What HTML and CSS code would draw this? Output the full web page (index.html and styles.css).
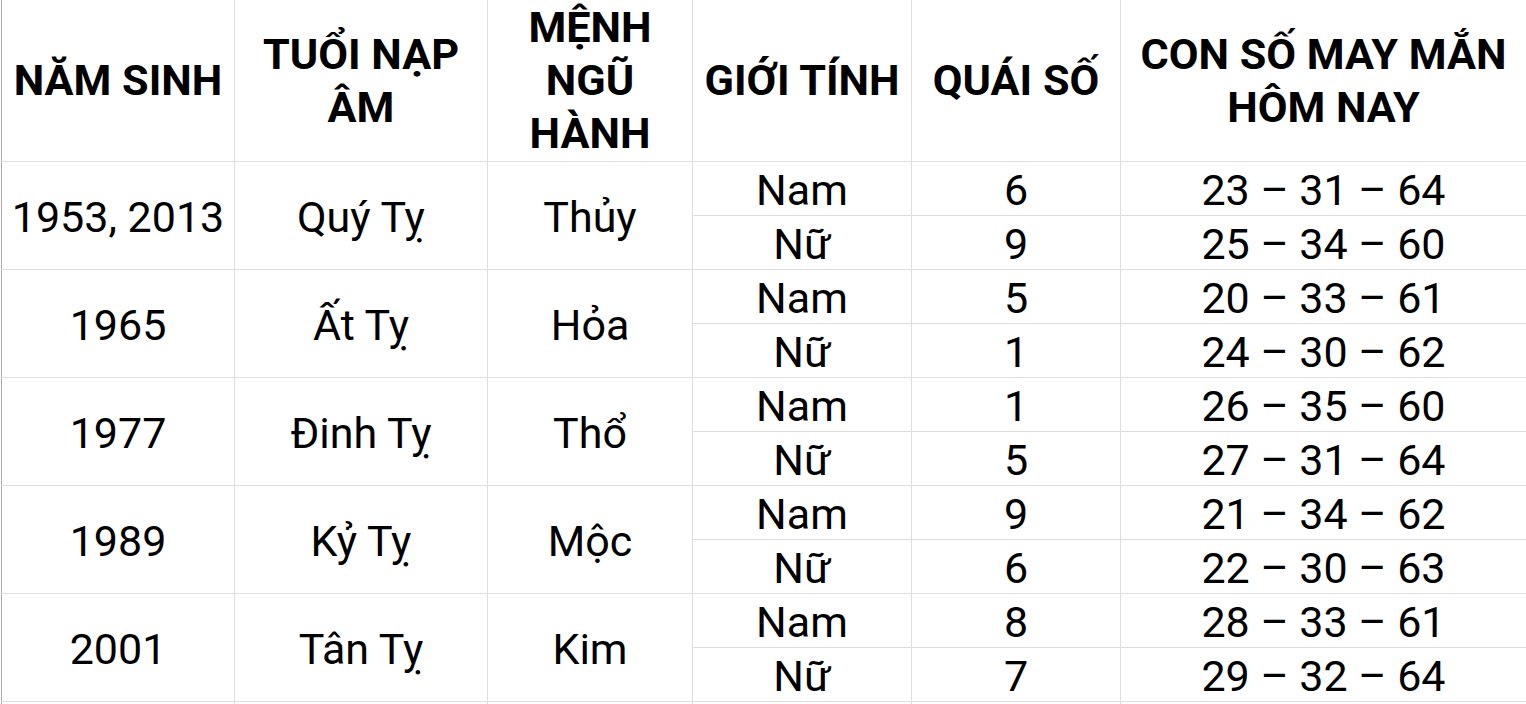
FILE: index.html
```html
<!DOCTYPE html>
<html lang="vi">
<head>
<meta charset="utf-8">
<link rel="stylesheet" href="styles.css">
</head>
<body>
<table class="luck">
  <colgroup>
    <col class="c1"><col class="c2"><col class="c3"><col class="c4"><col class="c5"><col class="c6">
  </colgroup>
  <thead>
    <tr>
      <th>NĂM SINH</th>
      <th>TUỔI NẠP ÂM</th>
      <th>MỆNH NGŨ HÀNH</th>
      <th>GIỚI TÍNH</th>
      <th>QUÁI SỐ</th>
      <th>CON SỐ MAY MẮN HÔM NAY</th>
    </tr>
  </thead>
  <tbody>
    <tr><td rowspan="2">1953, 2013</td><td rowspan="2">Quý Tỵ</td><td rowspan="2">Thủy</td><td>Nam</td><td>6</td><td>23 – 31 – 64</td></tr>
    <tr><td>Nữ</td><td>9</td><td>25 – 34 – 60</td></tr>
    <tr><td rowspan="2">1965</td><td rowspan="2">Ất Tỵ</td><td rowspan="2">Hỏa</td><td>Nam</td><td>5</td><td>20 – 33 – 61</td></tr>
    <tr><td>Nữ</td><td>1</td><td>24 – 30 – 62</td></tr>
    <tr><td rowspan="2">1977</td><td rowspan="2">Đinh Tỵ</td><td rowspan="2">Thổ</td><td>Nam</td><td>1</td><td>26 – 35 – 60</td></tr>
    <tr><td>Nữ</td><td>5</td><td>27 – 31 – 64</td></tr>
    <tr><td rowspan="2">1989</td><td rowspan="2">Kỷ Tỵ</td><td rowspan="2">Mộc</td><td>Nam</td><td>9</td><td>21 – 34 – 62</td></tr>
    <tr><td>Nữ</td><td>6</td><td>22 – 30 – 63</td></tr>
    <tr><td rowspan="2">2001</td><td rowspan="2">Tân Tỵ</td><td rowspan="2">Kim</td><td>Nam</td><td>8</td><td>28 – 33 – 61</td></tr>
    <tr><td>Nữ</td><td>7</td><td>29 – 32 – 64</td></tr>
    <tr><td></td><td></td><td></td><td></td><td></td><td></td></tr>
  </tbody>
</table>
</body>
</html>
```
FILE: styles.css
```css
html, body {
  margin: 0;
  padding: 0;
  background: #fff;
}
body {
  font-family: Roboto, "Noto Sans", sans-serif;
  color: #000;
  overflow: hidden;
}
.luck {
  margin-left: 1px;
  border-collapse: collapse;
  table-layout: fixed;
  width: 1525px;
}
.c1 { width: 233px; }
.c2 { width: 253px; }
.c3 { width: 205px; }
.c4 { width: 219px; }
.c5 { width: 209px; }
.c6 { width: 406px; }
.luck th,
.luck td {
  border: 1px solid #dddddd;
  text-align: center;
  vertical-align: middle;
  padding: 0 4px;
}
.luck th {
  border-top: none;
  height: 161px;
  font-size: 43.2px;
  font-weight: 700;
  line-height: 53px;
}
.luck td {
  height: 50px;
  font-size: 43px;
  font-weight: 400;
  line-height: 50px;
  padding-top: 3px;
}
.luck tr > :first-child {
  border-left-color: #aaaaaa;
}
.luck tbody tr:nth-child(even) > :first-child {
  border-left-color: #dddddd;
}
```
